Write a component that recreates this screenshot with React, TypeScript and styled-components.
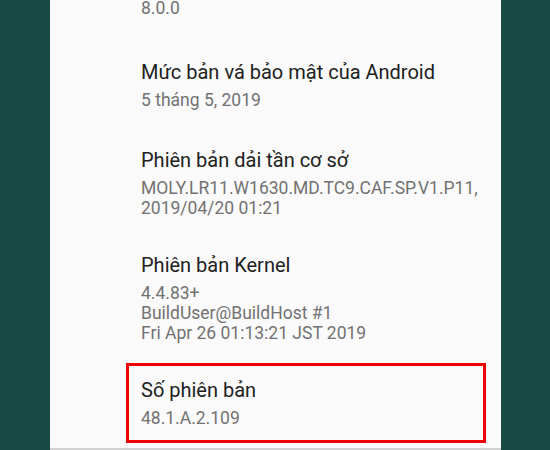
import styled, { createGlobalStyle } from "styled-components";

const GlobalStyle = createGlobalStyle`
  html, body {
    margin: 0;
    padding: 0;
    background: #164a43;
    overflow: hidden;
  }
  body {
    font-family: Roboto, "Noto Sans", "Liberation Sans", sans-serif;
  }
`;

type Info = {
  title: string;
  lines: string[];
  marked?: boolean;
};

// the list is scrolled: only the summary of "Phiên bản Android" is still visible
const topSummary = "8.0.0";

const items: Info[] = [
  { title: "Mức bản vá bảo mật của Android", lines: ["5 tháng 5, 2019"] },
  {
    title: "Phiên bản dải tần cơ sở",
    lines: ["MOLY.LR11.W1630.MD.TC9.CAF.SP.V1.P11,", "2019/04/20 01:21"],
  },
  {
    title: "Phiên bản Kernel",
    lines: ["4.4.83+", "BuildUser@BuildHost #1", "Fri Apr 26 01:13:21 JST 2019"],
  },
  { title: "Số phiên bản", lines: ["48.1.A.2.109"], marked: true },
];

const App = () => {
  return (
    <>
      <GlobalStyle />
      <Screen>
        <Panel>
          <List>
            <Tail>
              <Line $tight>{topSummary}</Line>
            </Tail>
            {items.map((item) => (
              <Item key={item.title} $marked={item.marked}>
                <Title>{item.title}</Title>
                <Summary>
                  {item.lines.map((line) => (
                    <Line key={line}>{line}</Line>
                  ))}
                </Summary>
              </Item>
            ))}
          </List>
        </Panel>
      </Screen>
    </>
  );
};

export default App;

const Screen = styled.div`
  width: 550px;
  height: 450px;
  display: flex;
`;

const Panel = styled.div`
  margin-left: 50px;
  width: 451px;
  height: 448px;
  background: #fafafa;
  border-bottom: 2px solid #d2d2d2;
  overflow: hidden;
`;

const List = styled.div`
  display: flex;
  flex-direction: column;
`;

const Tail = styled.div`
  padding: 0 16px 22px 91px;
`;

const Item = styled.div<{ $marked?: boolean }>`
  position: relative;
  min-height: 92px;
  box-sizing: border-box;
  padding: 17px 16px 17px 91px;
  display: flex;
  flex-direction: column;
  justify-content: center;

  &:last-child {
    min-height: 0;
  }

  ${({ $marked }) =>
    $marked &&
    `
    &::after {
      content: "";
      position: absolute;
      left: 76px;
      right: 15px;
      top: 3px;
      height: 80px;
      box-sizing: border-box;
      border: 3px solid #f20000;
    }
  `}
`;

const Title = styled.div`
  font-size: 20px;
  line-height: 26px;
  color: #212121;
`;

const Summary = styled.div`
  margin-top: 5px;
  display: flex;
  flex-direction: column;
`;

const Line = styled.div<{ $tight?: boolean }>`
  font-size: 17.5px;
  line-height: ${({ $tight }) => ($tight ? "16px" : "20px")};
  color: #727272;
  white-space: nowrap;
`;
